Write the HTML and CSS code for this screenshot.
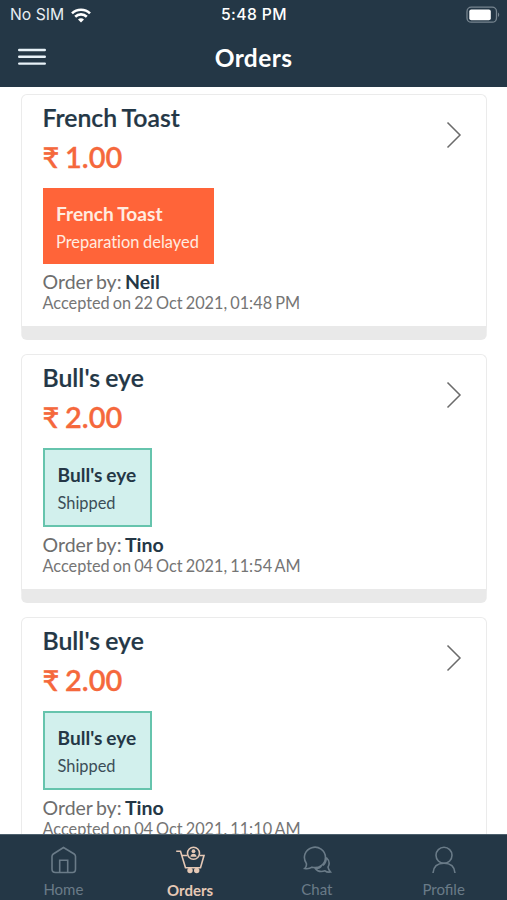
FILE: index.html
```html
<!DOCTYPE html>
<html lang="en">
<head>
<meta charset="utf-8">
<title>Orders</title>
<link rel="stylesheet" href="styles.css">
</head>
<body>
<div class="app">
  <header class="header">
    <div class="status">
      <div class="carrier"><span>No SIM</span>
        <svg width="20" height="15" viewBox="0 0 20 15" fill="none" stroke="#fff" stroke-width="2.6"><path d="M1 5.4C6 .6 14 .6 19 5.4M4.2 8.7C7.4 5.6 12.6 5.6 15.8 8.7"/><path d="M10 14.6l-3-3.2c1.7-1.5 4.3-1.5 6 0z" fill="#fff" stroke="none"/></svg>
      </div>
      <div class="time">5:48 PM</div>
      <svg class="battery" width="34" height="18" viewBox="0 0 34 18"><rect x="1" y="1.2" width="29.5" height="15" rx="4.3" fill="none" stroke="#778590" stroke-width="1.3"/><rect x="3.3" y="3.4" width="21.5" height="10.8" rx="2" fill="#fff"/><path d="M32 6.5c1.7.7 1.7 3.7 0 4.4z" fill="#778590"/></svg>
    </div>
    <div class="titlebar">
      <svg class="menu" width="28" height="18" viewBox="0 0 28 18" stroke="#e8f2f8" stroke-width="2.4" stroke-linecap="round"><path d="M1.2 2h25.6M1.2 8.8h25.6M1.2 15.6h25.6"/></svg>
      <h1>Orders</h1>
      <span></span>
    </div>
  </header>
  <main class="list">
    <article class="card">
      <div class="body">
        <h2>French Toast</h2>
        <p class="price">₹ 1.00</p>
        <div class="tag delayed"><strong>French Toast</strong><span>Preparation delayed</span></div>
        <p class="by">Order by: <b>Neil</b></p>
        <p class="date">Accepted on 22 Oct 2021, 01:48 PM</p>
      </div>
      <svg class="chevron" width="16" height="28" viewBox="0 0 16 28"><path d="M1.5 1.5L14 14 1.5 26.5"/></svg>
    </article>
    <article class="card">
      <div class="body">
        <h2>Bull's eye</h2>
        <p class="price">₹ 2.00</p>
        <div class="tag shipped"><strong>Bull's eye</strong><span>Shipped</span></div>
        <p class="by">Order by: <b>Tino</b></p>
        <p class="date">Accepted on 04 Oct 2021, 11:54 AM</p>
      </div>
      <svg class="chevron" width="16" height="28" viewBox="0 0 16 28"><path d="M1.5 1.5L14 14 1.5 26.5"/></svg>
    </article>
    <article class="card">
      <div class="body">
        <h2>Bull's eye</h2>
        <p class="price">₹ 2.00</p>
        <div class="tag shipped"><strong>Bull's eye</strong><span>Shipped</span></div>
        <p class="by">Order by: <b>Tino</b></p>
        <p class="date">Accepted on 04 Oct 2021, 11:10 AM</p>
      </div>
      <svg class="chevron" width="16" height="28" viewBox="0 0 16 28"><path d="M1.5 1.5L14 14 1.5 26.5"/></svg>
    </article>
  </main>
  <nav class="tabs">
    <a class="tab">
      <svg width="30" height="30" viewBox="0 0 30 30"><path d="M15.5 2.500L5.300 9Q4 10 4 11.500V24Q4 27.500 7.500 27.500H24.500Q27.500 27.500 27.500 24V11.500Q27.500 10 26.200 9ZM11.700 27V15.200H19.700V27"/></svg>
      <span>Home</span>
    </a>
    <a class="tab active">
      <svg width="32" height="30" viewBox="0 0 32 30"><path d="M2.200 6.200H6.500L11.500 22.800H26.500L30 10.500H26M7.800 10.500H13"/><circle cx="19.500" cy="8.200" r="6"/><g class="solid"><circle cx="19.500" cy="6.200" r="1.900"/><path d="M16.400 11.700c.2-4 6-4 6.200 0z"/><circle cx="16" cy="25.500" r="2.700"/><circle cx="22.700" cy="25.500" r="2.700"/></g></svg>
      <span>Orders</span>
    </a>
    <a class="tab">
      <svg width="30" height="30" viewBox="0 0 30 30"><path d="M4.300 18.200A10.500 10.200 0 1 1 10 22.200Q7 24.200 2.700 23.500Q5 21.500 4.300 18.200M24.300 12.500Q29 17 26 22.200Q26.500 25 28.500 27Q25 27.500 23 25.800Q16.500 28 13 23.200Q17.500 24 19.500 20.500M24 13Q24.500 17.500 21 20.500"/></svg>
      <span>Chat</span>
    </a>
    <a class="tab">
      <svg width="30" height="30" viewBox="0 0 30 30"><circle cx="15" cy="10.300" r="8"/><path d="M4 28C4.500 21 9 18.300 15 18.300S25.500 21 26 28"/></svg>
      <span>Profile</span>
    </a>
  </nav>
</div>
</body>
</html>
```
FILE: styles.css
```css
* { box-sizing: border-box; margin: 0; padding: 0; }
body { background: #fff; font-family: Lato, "Noto Sans", sans-serif; color: #243746; }
svg { display: block; flex: none; }
.app { height: 900px; display: flex; flex-direction: column; overflow: hidden; }
.header { height: 87px; flex: none; background: #243746; color: #fff; }
.status { height: 30px; padding: 0 7px 0 10px; display: grid; grid-template-columns: 1fr 67px 1fr; align-items: center; font: 400 15.700px/30px Inter, sans-serif; }
.carrier { display: flex; align-items: center; gap: 7px; color: #e8eef2; }
.time { font-weight: 500; letter-spacing: .4px; white-space: nowrap; margin-left: -.5px; }
.battery { justify-self: end; margin-top: -1px; }
.titlebar { height: 56px; padding: 0 18px; display: grid; grid-template-columns: 1fr auto 1fr; align-items: center; }
.titlebar h1 { font-size: 24.500px; line-height: 30px; font-weight: 700; letter-spacing: .4px; }
.menu { margin-top: -3px; }
.list { flex: 1; min-height: 0; overflow: hidden; padding: 7px 20px 0 21px; display: flex; flex-direction: column; gap: 14px; font-variant-ligatures: none; }
.card { flex: none; display: flex; justify-content: space-between; border: 1px solid #ebebeb; border-bottom: 14px solid #e9e9e9; border-radius: 6px; padding: 8px 24px 13px 20.500px; white-space: nowrap; }
.card h2 { font-size: 24.800px; line-height: 30px; font-weight: 600; word-spacing: -1px; -webkit-text-stroke: .2px currentColor; }
.price { font-size: 29px; line-height: 36px; margin-top: 6px; font-weight: 600; word-spacing: -1.500px; color: #f5683c; -webkit-text-stroke: .3px currentColor; }
.tag { width: max-content; margin-top: 13px; display: flex; flex-direction: column; gap: 4px; }
.tag strong { font-size: 19.100px; line-height: 24px; font-weight: 700; word-spacing: -.7px; }
.tag span { font-size: 16.400px; line-height: 24px; word-spacing: -.5px; }
.delayed { width: 171px; background: #ff6439; color: #ffece0; padding: 14px 14px 10px 13.500px; }
.shipped { width: 109.500px; background: #d2f0ed; border: 2px solid #66c4ad; padding: 13px 12px 10px 13px; }
.shipped span { color: #3b4d58; }
.by { margin-top: 7px; font-size: 19.500px; line-height: 22px; color: #6e6e6e; word-spacing: -1.600px; }
.by b { color: #243746; }
.date { font-size: 16.300px; line-height: 20px; color: #757575; word-spacing: -1.100px; }
.chevron { margin-top: 18px; fill: none; stroke: #6b6b6b; stroke-width: 1.500px; }
.tabs { height: 66px; flex: none; display: grid; grid-template-columns: repeat(4, 1fr); background: #243746; border-top: 1px solid #4d606d; }
.tab { display: flex; flex-direction: column; align-items: center; padding-top: 10px; color: #6a7b88; font-size: 15px; line-height: 20px; gap: 4px; }
.tab svg { fill: none; stroke: currentColor; stroke-width: 1.600px; }
.tab .solid { fill: currentColor; stroke: none; }
.active { color: #e5c8b5; font-weight: 700; gap: 5px; }
```
